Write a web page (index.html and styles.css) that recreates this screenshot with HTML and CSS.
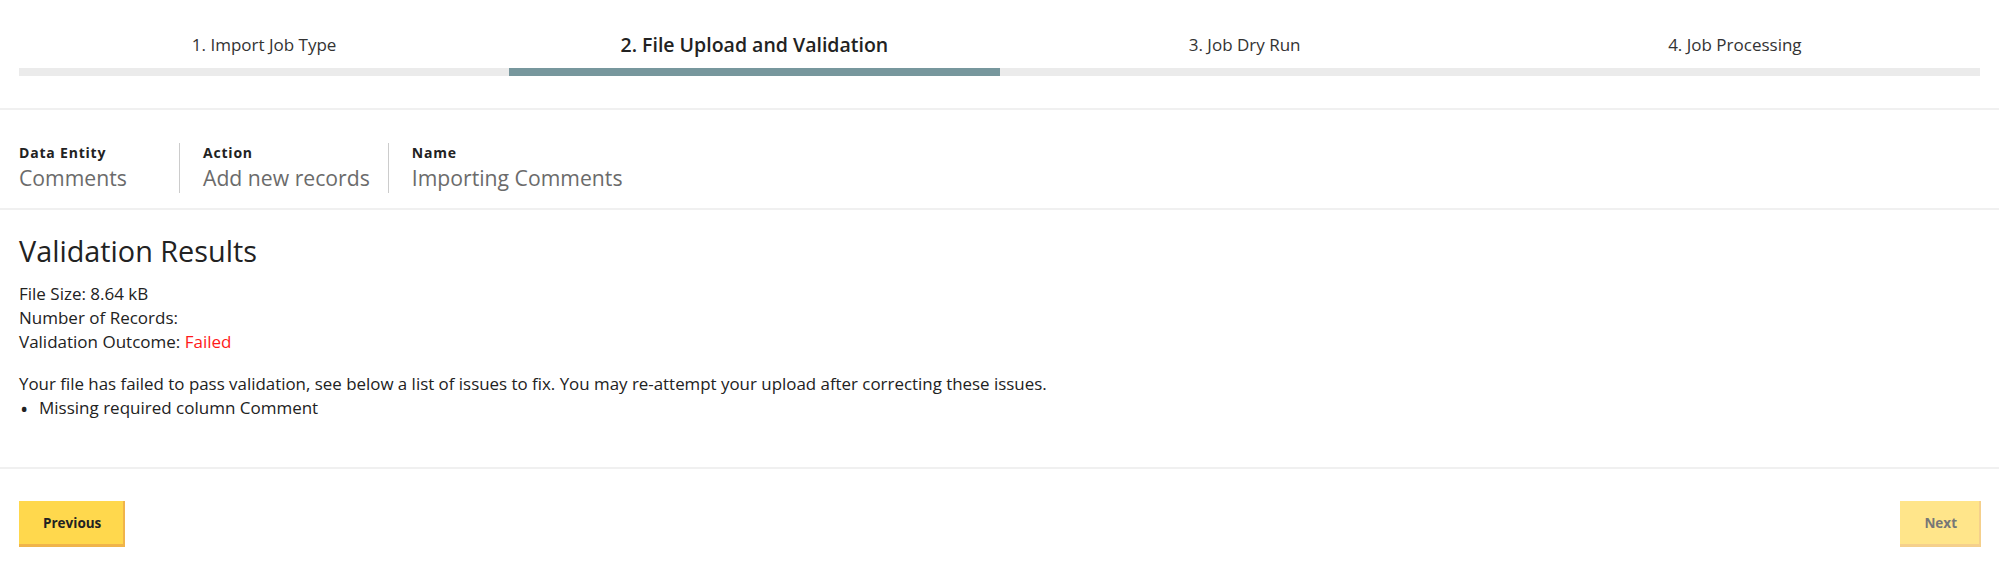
FILE: index.html
```html
<!DOCTYPE html>
<html lang="en">
<head>
<meta charset="utf-8">
<title>Import Job - File Upload and Validation</title>
<link rel="stylesheet" href="styles.css">
</head>
<body>
<div class="page">
  <nav class="steps">
    <div class="step"><div class="step-label">1. Import Job Type</div><div class="step-bar"></div></div>
    <div class="step step-active"><div class="step-label">2. File Upload and Validation</div><div class="step-bar"></div></div>
    <div class="step"><div class="step-label">3. Job Dry Run</div><div class="step-bar"></div></div>
    <div class="step"><div class="step-label">4. Job Processing</div><div class="step-bar"></div></div>
  </nav>

  <section class="summary">
    <div class="summary-item summary-first">
      <div class="summary-label">Data Entity</div>
      <div class="summary-value">Comments</div>
    </div>
    <div class="summary-item">
      <div class="summary-label">Action</div>
      <div class="summary-value">Add new records</div>
    </div>
    <div class="summary-item summary-last">
      <div class="summary-label">Name</div>
      <div class="summary-value">Importing Comments</div>
    </div>
  </section>

  <section class="results">
    <h2 class="results-title">Validation Results</h2>
    <div class="results-stats">
      <div>File Size: 8.64 kB</div>
      <div>Number of Records:</div>
      <div>Validation Outcome: <span class="failed">Failed</span></div>
    </div>
    <p class="results-message">Your file has failed to pass validation, see below a list of issues to fix. You may re-attempt your upload after correcting these issues.</p>
    <ul class="issues">
      <li>Missing required column Comment</li>
    </ul>
  </section>

  <footer class="actions">
    <button class="btn btn-primary" type="button">Previous</button>
    <button class="btn btn-disabled" type="button" disabled>Next</button>
  </footer>
</div>
</body>
</html>
```

FILE: styles.css
```css
* { box-sizing: border-box; }

html, body {
  margin: 0;
  padding: 0;
  background: #ffffff;
}

body {
  font-family: "Open Sans", "Lato", "Liberation Sans", sans-serif;
  color: #222222;
  font-size: 17px;
}

.page {
  display: flex;
  flex-direction: column;
}

/* Steps */
.steps {
  display: flex;
  padding: 31px 19px 32px;
  border-bottom: 2px solid #f0f0f0;
}

.step {
  flex: 1 1 0;
  display: flex;
  flex-direction: column;
}

.step-label {
  text-align: center;
  font-size: 17px;
  line-height: 28px;
  color: #333333;
}

.step-bar {
  height: 8px;
  margin-top: 9px;
  background: #ebebeb;
}

.step-active .step-label {
  font-size: 19.5px;
  font-weight: 600;
  color: #222222;
}

.step-active .step-bar {
  background: #77979d;
}

/* Summary */
.summary {
  display: flex;
  padding: 33px 19px 15px;
  border-bottom: 2px solid #f0f0f0;
}

.summary-item {
  padding: 0 18px 0 23px;
  border-right: 1px solid #cccccc;
}

.summary-first {
  padding-left: 0;
  min-width: 161px;
}

.summary-last {
  border-right: none;
}

.summary-label {
  font-size: 14px;
  font-weight: 700;
  line-height: 20px;
  color: #222222;
  letter-spacing: 0.8px;
}

.summary-value {
  font-size: 21.2px;
  line-height: 30px;
  color: #6b6b6b;
}

/* Results */
.results {
  padding: 25px 19px 47px;
  border-bottom: 2px solid #f0f0f0;
}

.results-title {
  margin: 0;
  font-size: 28.8px;
  line-height: 32px;
  font-weight: 400;
  color: #222222;
}

.results-stats {
  margin-top: 15px;
  line-height: 24px;
}

.failed {
  color: #ff1a1a;
}

.results-message {
  margin: 18px 0 0;
  line-height: 24px;
  font-size: 16.9px;
}

.issues {
  list-style: none;
  margin: 0;
  padding: 0;
  line-height: 24px;
}

.issues li {
  display: flex;
}

.issues li::before {
  content: "\2022";
  width: 19px;
  padding-left: 1px;
  font-size: 22px;
  line-height: 24px;
}

/* Actions */
.actions {
  display: flex;
  justify-content: space-between;
  align-items: flex-start;
  padding: 32px 18px 20px 19px;
}

.btn {
  font-family: inherit;
  font-size: 13.5px;
  font-weight: 700;
  height: 46px;
  padding: 0 22px 0 24px;
  border: none;
  border-right: 2px solid transparent;
  border-bottom: 3px solid transparent;
  border-radius: 0;
  cursor: pointer;
}

.btn-primary {
  background: #ffd84d;
  color: #222222;
  border-right-color: #f0b44a;
  border-bottom-color: #f0b44a;
}

.btn-disabled {
  background: #ffe58a;
  color: #777777;
  border-right-color: #f5d08c;
  border-bottom-color: #f5d08c;
  cursor: default;
}
```
